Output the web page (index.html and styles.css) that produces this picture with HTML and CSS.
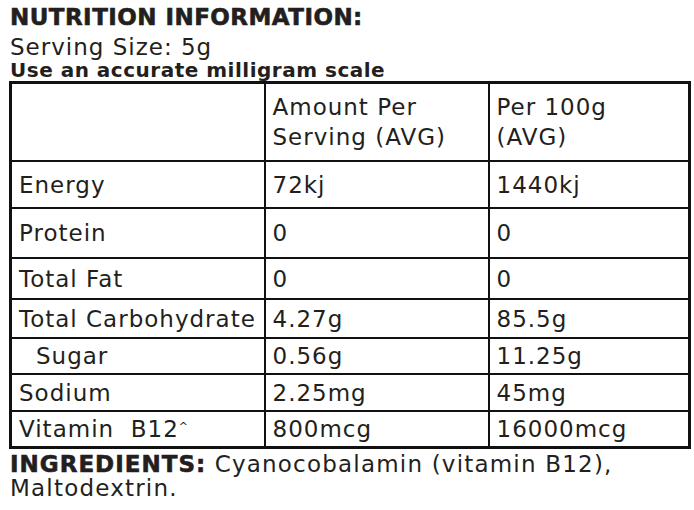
FILE: index.html
```html
<!DOCTYPE html>
<html lang="en">
<head>
<meta charset="utf-8">
<title>Nutrition Information</title>
<link rel="stylesheet" href="styles.css">
</head>
<body>
<div class="page">
  <h1 class="title">NUTRITION INFORMATION:</h1>
  <p class="serving">Serving Size: 5g</p>
  <p class="scale">Use an accurate milligram scale</p>
  <table class="facts">
    <colgroup>
      <col class="c1"><col class="c2"><col class="c3">
    </colgroup>
    <tr class="r-head">
      <td></td>
      <td>Amount Per<br>Serving (AVG)</td>
      <td>Per 100g<br>(AVG)</td>
    </tr>
    <tr class="r-energy"><td>Energy</td><td>72kj</td><td>1440kj</td></tr>
    <tr class="r-protein"><td>Protein</td><td>0</td><td>0</td></tr>
    <tr class="r-fat"><td>Total Fat</td><td>0</td><td>0</td></tr>
    <tr class="r-carb"><td>Total Carbohydrate</td><td>4.27g</td><td>85.5g</td></tr>
    <tr class="r-sugar"><td class="indent">Sugar</td><td>0.56g</td><td>11.25g</td></tr>
    <tr class="r-sodium"><td>Sodium</td><td>2.25mg</td><td>45mg</td></tr>
    <tr class="r-vit"><td>Vitamin&nbsp; B12<sup class="caret">^</sup></td><td>800mcg</td><td>16000mcg</td></tr>
  </table>
  <p class="ingredients"><strong class="ing-label">INGREDIENTS:</strong> Cyanocobalamin (vitamin B12),<br>Maltodextrin.</p>
</div>
</body>
</html>
```

FILE: styles.css
```css
html, body {
  margin: 0;
  padding: 0;
  background: #ffffff;
}

body {
  font-family: "DejaVu Sans", "Noto Sans", sans-serif;
  color: #231f20;
}

.page {
  padding: 3px 0 0 10px;
}

.title {
  margin: 0;
  font-size: 23px;
  font-weight: 900;
  line-height: 28px;
  letter-spacing: 0.45px;
  color: #231f20;
  -webkit-text-stroke: 0.6px #231f20;
}

.serving {
  margin: 3px 0 0;
  font-size: 23px;
  line-height: 26px;
  letter-spacing: 1px;
}

.scale {
  margin: 0;
  font-size: 20px;
  font-weight: 700;
  line-height: 21px;
  letter-spacing: 0.5px;
  height: 21px;
}

.facts {
  margin-left: -1px;
  width: 679px;
  border-collapse: collapse;
  table-layout: fixed;
  border: 3px solid #111;
  font-size: 23px;
  letter-spacing: 1px;
}

.c1 { width: 254px; }
.c2 { width: 224px; }
.c3 { width: 201px; }

.facts td {
  border: 2px solid #111;
  padding: 0 7px;
  vertical-align: middle;
  line-height: 26px;
  white-space: nowrap;
}

.r-head td { height: 76px; line-height: 30px; }
.r-energy td { height: 45px; }
.r-protein td { height: 48px; }
.r-fat td { height: 39px; }
.r-carb td { height: 37px; }
.r-sugar td { height: 34px; }
.r-sodium td { height: 35px; }
.r-vit td { height: 34px; }

.indent {
  padding-left: 24px !important;
}

.caret {
  font-size: 11px;
  vertical-align: top;
  position: relative;
  top: -2px;
}

.ingredients {
  margin: 3px 0 0;
  font-size: 23px;
  line-height: 24px;
  letter-spacing: 1.2px;
}

.ing-label {
  font-weight: 900;
  letter-spacing: 1px;
  -webkit-text-stroke: 0.6px #231f20;
}
```
